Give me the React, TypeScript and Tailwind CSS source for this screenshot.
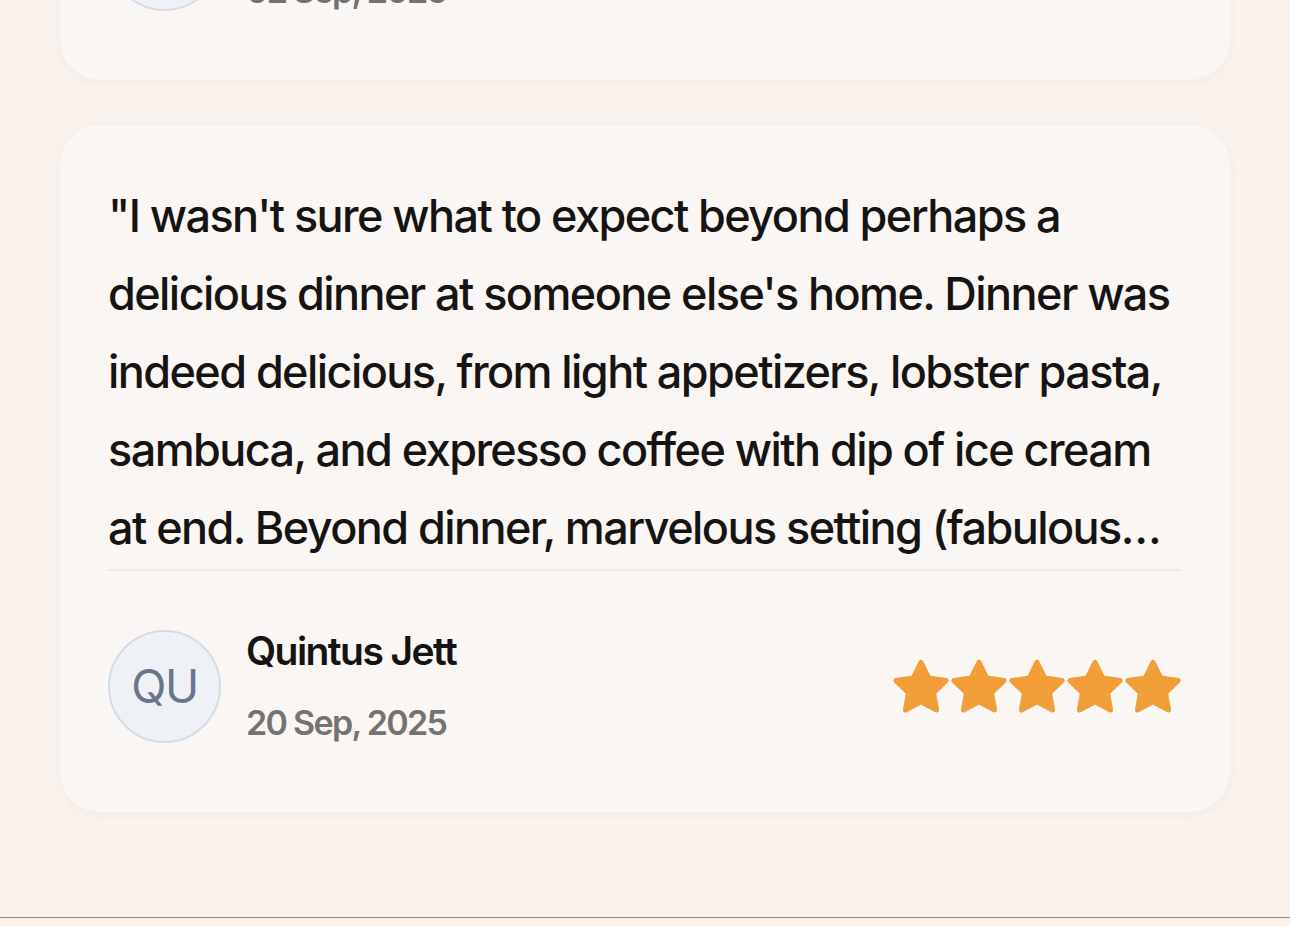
import React from "react";

type Review = {
  initials: string;
  name: string;
  date: string;
  text: string;
};

const reviews: Review[] = [
  {
    initials: "MA",
    name: "Marcella Aubrey",
    date: "02 Sep, 2025",
    text: "\"A wonderful evening from start to finish. Our hosts welcomed us like old friends, the food was generous and thoughtfully prepared, and the conversation flowed all night long. We left with full hearts, new recipes and a promise to come back again very soon with the whole family.\"",
  },
  {
    initials: "QU",
    name: "Quintus Jett",
    date: "20 Sep, 2025",
    text: "\"I wasn't sure what to expect beyond perhaps a delicious dinner at someone else's home. Dinner was indeed delicious, from light appetizers, lobster pasta, sambuca, and expresso coffee with dip of ice cream at end. Beyond dinner, marvelous setting (fabulous terrace overlooking the city lights) and the most charming hosts.\"",
  },
];

function Star() {
  return (
    <svg viewBox="1.7 1.6 20.6 19.6" className="h-[57px] w-[58px]" fill="#f29e38" stroke="#f29e38" strokeWidth="1.8" strokeLinejoin="round">
      <path d="M12 2.8l2.75 5.6 6.15.9-4.45 4.33 1.05 6.12L12 16.86l-5.5 2.9 1.05-6.13L3.1 9.3l6.15-.9z" />
    </svg>
  );
}

function ReviewCard({ review }: { review: Review }) {
  return (
    <div className="rounded-[40px] bg-[#faf6f3] px-12 pt-[52px] pb-[69px] shadow-[0_2px_10px_rgba(160,120,100,0.06)]">
      <p className="line-clamp-5 text-[45px] leading-[78px] font-medium tracking-[-0.035em] text-[#161413]">
        {review.text}
      </p>
      <div className="mt-[2px] h-[2px] bg-[#eeeae7]" />
      <div className="mt-[58px] flex items-center justify-between">
        <div className="flex items-center gap-[25px]">
          <div className="flex h-[113px] w-[113px] items-center justify-center rounded-full border-2 border-[#d6dce4] bg-[#eef2f6] text-[46px] leading-none tracking-[-0.03em] text-[#6b7489]">
            {review.initials}
          </div>
          <div className="flex flex-col gap-[30px]">
            <span className="text-[39px] leading-[44px] font-semibold tracking-[-0.04em] text-[#161413]">{review.name}</span>
            <span className="text-[34px] leading-[40px] font-semibold tracking-[-0.05em] text-[#767270]">{review.date}</span>
          </div>
        </div>
        <div className="flex items-center">
          {[0, 1, 2, 3, 4].map((i) => (
            <Star key={i} />
          ))}
        </div>
      </div>
    </div>
  );
}

export default function App() {
  return (
    <div className="flex h-[926px] flex-col overflow-hidden bg-[#f9f2ed]" style={{ fontFamily: "Inter, 'Liberation Sans', sans-serif" }}>
      <main className="flex-1 overflow-hidden px-[60px]">
        <div className="-mt-[607px] flex flex-col gap-[45px]">
          {reviews.map((r) => (
            <ReviewCard key={r.name} review={r} />
          ))}
        </div>
      </main>
      <div className="h-[9px] border-t border-[#8f8a87]" />
    </div>
  );
}
